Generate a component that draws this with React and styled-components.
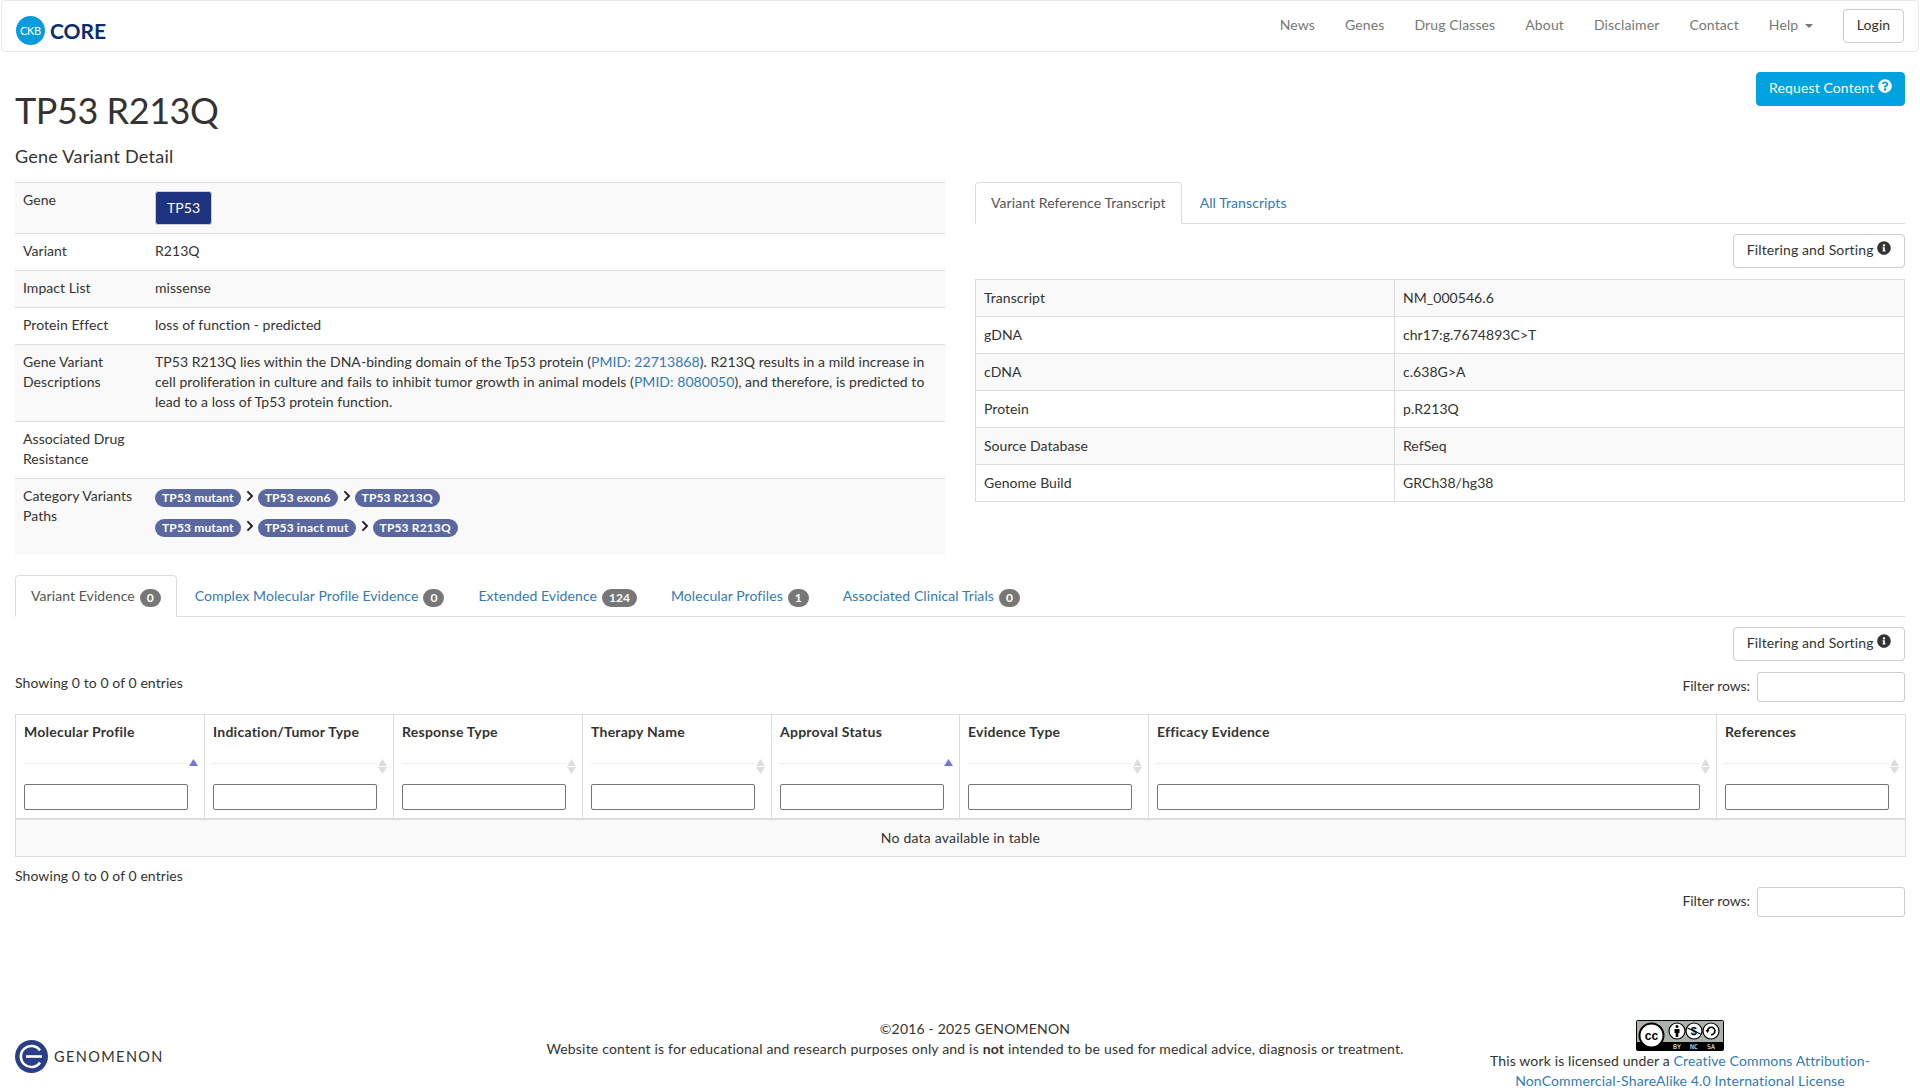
import React from "react";
import styled, { createGlobalStyle } from "styled-components";
import { FaInfoCircle, FaQuestionCircle, FaChevronRight } from "react-icons/fa";

const Global = createGlobalStyle`
  * { box-sizing: border-box; }
  html, body { margin: 0; padding: 0; background: #fff; }
  body { font-family: Lato, "Open Sans", "Liberation Sans", sans-serif; font-size: 14px; line-height: 20px; color: #333; letter-spacing: 0.12px; }
  a { color: #337ab7; text-decoration: none; }
`;

const Navbar = styled.nav`
  display: flex; align-items: center; justify-content: space-between;
  height: 52px; margin: 0 1px; padding: 0 14px 0 14px;
  border: 1px solid #e7e7e7; border-radius: 4px; background: #fff;
`;
const Brand = styled.a`display: flex; align-items: center; gap: 3px; padding-top: 9px; color: #0b2e6f;`;
const BrandMark = styled.span`
  width: 29px; height: 29px; border-radius: 50%; background: #0a9bdc; color: #fff;
  display: flex; align-items: center; justify-content: center; font-size: 11px; letter-spacing: -0.3px;
`;
const BrandName = styled.span`font-size: 21px; font-weight: 700; letter-spacing: 0; margin-left: 2px;`;
const NavLinks = styled.div`display: flex; align-items: center;`;
const NavLink = styled.a`color: #777; padding: 0 15px; margin-top: -2px;`;
const Caret = styled.span`
  display: inline-block; width: 0; height: 0; margin-left: 3px; vertical-align: middle;
  border-top: 4px solid #777; border-left: 4px solid transparent; border-right: 4px solid transparent;
`;
const Btn = styled.button`
  font: inherit; letter-spacing: inherit; height: 34px; padding: 0 12px 2px; border-radius: 4px; cursor: pointer;
  border: 1px solid ${p => (p.$primary ? "#00a3e0" : "#ccc")};
  background: ${p => (p.$primary ? "#00a3e0" : "#fff")};
  color: ${p => (p.$primary ? "#fff" : "#333")};
  white-space: nowrap;
  svg { font-size: 14px; vertical-align: -0.02em; position: relative; top: 0; }
`;
const LoginBtn = styled(Btn)`margin-left: 15px; width: 61px; padding: 0 0 2px;`;

const Page = styled.main`padding: 0 15px;`;
const Header = styled.header`display: flex; justify-content: space-between; align-items: flex-start; padding-top: 20px;`;
const Title = styled.h1`font-size: 36px; font-weight: 400; line-height: 40px; margin: 18px 0 0; letter-spacing: -0.45px;`;
const SubTitle = styled.h3`font-size: 18px; font-weight: 400; line-height: 20px; margin: 16px 0 16px; letter-spacing: 0.26px;`;

const Columns = styled.div`display: grid; grid-template-columns: 930px 930px; gap: 30px; align-items: start;`;
const RightCol = styled.div``;

const DetailTable = styled.table`
  width: 100%; border-collapse: collapse; table-layout: fixed; letter-spacing: 0.05px;
  td { padding: 7px 8px 9px; vertical-align: top; border-top: 1px solid #ddd; }
  td:first-child { width: 132px; }
  tr:nth-child(odd) td { background: #f9f9f9; }
`;
const WidgetCell = styled.td`
  &&& { padding: 8px; }
`;
const GeneBtn = styled.span`
  display: block; width: 57px; height: 34px; line-height: 32px; text-align: center; color: #fff;
  background: #1f3480; border: 1px solid #ccd; border-radius: 3px;
`;
const Path = styled.div`
  display: flex; align-items: flex-start; height: 20px; margin-bottom: 10px;
`;
const Crumb = styled.span`
  display: inline-block; height: 18px; line-height: 18px; margin-top: 2px; padding: 0 7px; border-radius: 10px;
  background: #5a689f; color: #fff; font-size: 12px; font-weight: 700; white-space: nowrap; letter-spacing: 0.15px;
`;
const Sep = styled(FaChevronRight)`width: 10px; height: 12px; margin: 3px 3px 0 4px; color: #222; flex: none;`;

const Tabs = styled.ul`
  display: flex; list-style: none; margin: 0; padding: 0; border-bottom: 1px solid #ddd; height: 42px; letter-spacing: 0.08px;
`;
const Tab = styled.li`
  height: 42px; padding: 10px 15px; margin-right: 2px; border: 1px solid ${p => (p.$active ? "#ddd" : "transparent")};
  border-bottom-color: ${p => (p.$active ? "#fff" : "transparent")};
  border-radius: 4px 4px 0 0; background: ${p => (p.$active ? "#fff" : "transparent")}; color: ${p => (p.$active ? "#555" : "#337ab7")}; white-space: nowrap;
`;
const Badge = styled.span`
  display: inline-block; min-width: 10px; margin-left: 5px; padding: 3px 7px; border-radius: 10px; background: #777; color: #fff;
  font-size: 12px; font-weight: 700; line-height: 1; vertical-align: -1px; letter-spacing: 0;
`;
const ToolRow = styled.div`display: flex; justify-content: flex-end; margin-top: 10px;`;
const ToolBtn = styled(Btn)`width: 172px; padding: 0 0 2px;`;

const TranscriptTable = styled.table`
  width: 100%; margin-top: 11px; border-collapse: collapse; table-layout: fixed; letter-spacing: 0.05px;
  td { padding: 8px; border: 1px solid #ddd; }
  td:first-child { width: 419px; }
  tr:nth-child(odd) td { background: #f9f9f9; }
`;

const EvidenceSection = styled.section`margin-top: 20px;`;
const InfoRow = styled.div`display: flex; justify-content: space-between; align-items: flex-start; height: 30px; margin-top: ${p => p.$top}px;`;
const FilterLabel = styled.label`display: flex; align-items: center; gap: 7px;`;
const FilterText = styled.span`margin-bottom: 2px; letter-spacing: -0.08px;`;
const FilterInput = styled.input`
  width: 148px; height: 30px; border: 1px solid #ccc; border-radius: 3px; background: #fff; padding: 0 6px;
`;
const InfoText = styled.div`margin-top: ${p => p.$offset}px; letter-spacing: 0.08px;`;
const EvidenceTable = styled.table`
  width: 100%; margin-top: 12px; border-collapse: collapse; table-layout: fixed;
  th { padding: 7px 8px 8px; border: 1px solid #ddd; border-bottom: 2px solid #ddd; text-align: left; font-weight: 700; vertical-align: top; letter-spacing: 0.24px; }
  td { padding: 8px; border: 1px solid #ddd; background: #f9f9f9; text-align: center; letter-spacing: 0.2px; }
`;
const Col = styled.col`width: ${p => p.$w}px;`;
const SortBar = styled.div`
  position: relative; margin: 21px 8px 20px 0; height: 1px; background: #eee;
`;
const SortIcon = styled.svg`position: absolute; right: -10px; top: -4px; width: 9px; height: 15px;`;
const ColInput = styled.input`
  display: block; width: 164px; height: 26px; border: 1px solid #767676; border-radius: 2px; background: #fff; padding: 1px 2px;
  ${p => p.$wide && "width: 543px;"}
`;

const Footer = styled.footer`
  display: grid; grid-template-columns: 480px 960px 450px; align-items: start; margin-top: 102px; padding-bottom: 0;
`;
const Genomenon = styled.div`display: flex; align-items: center; gap: 6px; margin-top: 21px;`;
const GenomenonName = styled.span`font-size: 14.5px; letter-spacing: 1.4px; color: #333;`;
const FooterCenter = styled.div`text-align: center; letter-spacing: 0.18px;`;
const FooterRight = styled.div`text-align: center; display: flex; flex-direction: column; align-items: center; margin-top: 1px; letter-spacing: 0.14px;`;
const CcBadge = styled.svg`display: block; width: 88px; height: 31px;`;

const Sort = ({ active }) => (
  <SortIcon viewBox="0 0 9 15">
    <path d="M4.5 0 L9 7 H0 Z" fill={active ? "#6f76d8" : "#ddd"} />
    {!active && <path d="M4.5 15 L0 8 H9 Z" fill="#ddd" />}
  </SortIcon>
);

const COLS = [
  ["Molecular Profile", 189, true], ["Indication/Tumor Type", 189], ["Response Type", 189], ["Therapy Name", 189],
  ["Approval Status", 188, true], ["Evidence Type", 189], ["Efficacy Evidence", 568, false, true], ["References", 189],
];

const Filter = ({ top, offset }) => (
  <InfoRow $top={top}>
    <InfoText $offset={offset}>Showing 0 to 0 of 0 entries</InfoText>
    <FilterLabel><FilterText>Filter rows:</FilterText> <FilterInput /></FilterLabel>
  </InfoRow>
);

export default function App() {
  return (
    <>
      <Global />
      <Navbar>
        <Brand>
          <BrandMark>CKB</BrandMark>
          <BrandName>CORE</BrandName>
        </Brand>
        <NavLinks>
          {["News", "Genes", "Drug Classes", "About", "Disclaimer", "Contact"].map(n => <NavLink key={n}>{n}</NavLink>)}
          <NavLink>Help <Caret /></NavLink>
          <LoginBtn>Login</LoginBtn>
        </NavLinks>
      </Navbar>
      <Page>
        <Header>
          <div>
            <Title>TP53 R213Q</Title>
            <SubTitle>Gene Variant Detail</SubTitle>
          </div>
          <Btn $primary>Request Content <FaQuestionCircle /></Btn>
        </Header>
        <Columns>
          <DetailTable>
            <tbody>
              <tr><td>Gene</td><WidgetCell><GeneBtn>TP53</GeneBtn></WidgetCell></tr>
              <tr><td>Variant</td><td>R213Q</td></tr>
              <tr><td>Impact List</td><td>missense</td></tr>
              <tr><td>Protein Effect</td><td>loss of function - predicted</td></tr>
              <tr>
                <td>Gene Variant Descriptions</td>
                <td>TP53 R213Q lies within the DNA-binding domain of the Tp53 protein (<a>PMID: 22713868</a>). R213Q results in a mild increase in cell proliferation in culture and fails to inhibit tumor growth in animal models (<a>PMID: 8080050</a>), and therefore, is predicted to lead to a loss of Tp53 protein function.</td>
              </tr>
              <tr><td>Associated Drug Resistance</td><td></td></tr>
              <tr>
                <td>Category Variants Paths</td>
                <WidgetCell>
                  <Path><Crumb>TP53 mutant</Crumb><Sep /><Crumb>TP53 exon6</Crumb><Sep /><Crumb>TP53 R213Q</Crumb></Path>
                  <Path><Crumb>TP53 mutant</Crumb><Sep /><Crumb>TP53 inact mut</Crumb><Sep /><Crumb>TP53 R213Q</Crumb></Path>
                </WidgetCell>
              </tr>
            </tbody>
          </DetailTable>
          <RightCol>
            <Tabs>
              <Tab $active>Variant Reference Transcript</Tab>
              <Tab><a>All Transcripts</a></Tab>
            </Tabs>
            <ToolRow><ToolBtn>Filtering and Sorting <FaInfoCircle /></ToolBtn></ToolRow>
            <TranscriptTable>
              <tbody>
                <tr><td>Transcript</td><td>NM_000546.6</td></tr>
                <tr><td>gDNA</td><td>chr17:g.7674893C&gt;T</td></tr>
                <tr><td>cDNA</td><td>c.638G&gt;A</td></tr>
                <tr><td>Protein</td><td>p.R213Q</td></tr>
                <tr><td>Source Database</td><td>RefSeq</td></tr>
                <tr><td>Genome Build</td><td>GRCh38/hg38</td></tr>
              </tbody>
            </TranscriptTable>
          </RightCol>
        </Columns>
        <EvidenceSection>
          <Tabs>
            <Tab $active>Variant Evidence<Badge>0</Badge></Tab>
            <Tab>Complex Molecular Profile Evidence<Badge>0</Badge></Tab>
            <Tab>Extended Evidence<Badge>124</Badge></Tab>
            <Tab>Molecular Profiles<Badge>1</Badge></Tab>
            <Tab>Associated Clinical Trials<Badge>0</Badge></Tab>
          </Tabs>
          <ToolRow><ToolBtn>Filtering and Sorting <FaInfoCircle /></ToolBtn></ToolRow>
          <Filter top={11} offset={1} />
          <EvidenceTable>
            <colgroup>
              {COLS.map(([name, w]) => <Col key={name} $w={w} />)}
            </colgroup>
            <thead>
              <tr>
                {COLS.map(([name, , active, wide]) => (
                  <th key={name}>
                    {name}
                    <SortBar><Sort active={active} /></SortBar>
                    <ColInput $wide={wide} />
                  </th>
                ))}
              </tr>
            </thead>
            <tbody><tr><td colSpan={8}>No data available in table</td></tr></tbody>
          </EvidenceTable>
          <Filter top={30} offset={-21} />
        </EvidenceSection>
        <Footer>
          <Genomenon>
            <svg width="33" height="33" viewBox="0 0 33 33">
              <circle cx="16.5" cy="16.5" r="16.5" fill="#2a3f86" />
              <path d="M25 10.5 A10.5 10.5 0 1 0 25 22.5" fill="none" stroke="#fff" strokeWidth="2.6" />
              <path d="M11 16.5 H27" stroke="#fff" strokeWidth="2.6" />
            </svg>
            <GenomenonName>GENOMENON</GenomenonName>
          </Genomenon>
          <FooterCenter>
            <div>©2016 - 2025 GENOMENON</div>
            <div>Website content is for educational and research purposes only and is <b>not</b> intended to be used for medical advice, diagnosis or treatment.</div>
          </FooterCenter>
          <FooterRight>
            <CcBadge viewBox="0 0 88 31">
              <rect x="0" y="0" width="88" height="31" rx="2" fill="#000" />
              <rect x="1" y="1" width="86" height="21" fill="#aab2ab" />
              <circle cx="15.5" cy="15.5" r="12" fill="#fff" stroke="#000" strokeWidth="2" />
              <text x="15.5" y="19.5" textAnchor="middle" fontSize="12" fontWeight="700" fontFamily="'Liberation Sans', sans-serif" fill="#000">cc</text>
              <circle cx="41" cy="11" r="8" fill="#fff" stroke="#000" strokeWidth="1.2" />
              <circle cx="41" cy="6.5" r="1.5" fill="#000" />
              <path d="M38.5 9 H43.5 V13 H42.3 V17 H39.7 V13 H38.5 Z" fill="#000" />
              <circle cx="58" cy="11" r="8" fill="#fff" stroke="#000" strokeWidth="1.2" />
              <text x="58" y="15" textAnchor="middle" fontSize="11" fontWeight="700" fontFamily="'Liberation Sans', sans-serif" fill="#000">$</text>
              <path d="M51.5 8 L64.5 14" stroke="#000" strokeWidth="1.2" />
              <circle cx="75" cy="11" r="8" fill="#fff" stroke="#000" strokeWidth="1.2" />
              <path d="M71.5 11 A3.7 3.7 0 1 1 75 14.7" fill="none" stroke="#000" strokeWidth="1.6" />
              <path d="M69.5 10 H73.5 L71.5 13 Z" fill="#000" />
              <text x="41" y="29" textAnchor="middle" fontSize="6.5" fontFamily="'DejaVu Sans Mono', monospace" fill="#fff">BY</text>
              <text x="58" y="29" textAnchor="middle" fontSize="6.5" fontFamily="'DejaVu Sans Mono', monospace" fill="#fff">NC</text>
              <text x="75" y="29" textAnchor="middle" fontSize="6.5" fontFamily="'DejaVu Sans Mono', monospace" fill="#fff">SA</text>
            </CcBadge>
            <div>This work is licensed under a <a>Creative Commons Attribution-NonCommercial-ShareAlike 4.0 International License</a></div>
          </FooterRight>
        </Footer>
      </Page>
    </>
  );
}
